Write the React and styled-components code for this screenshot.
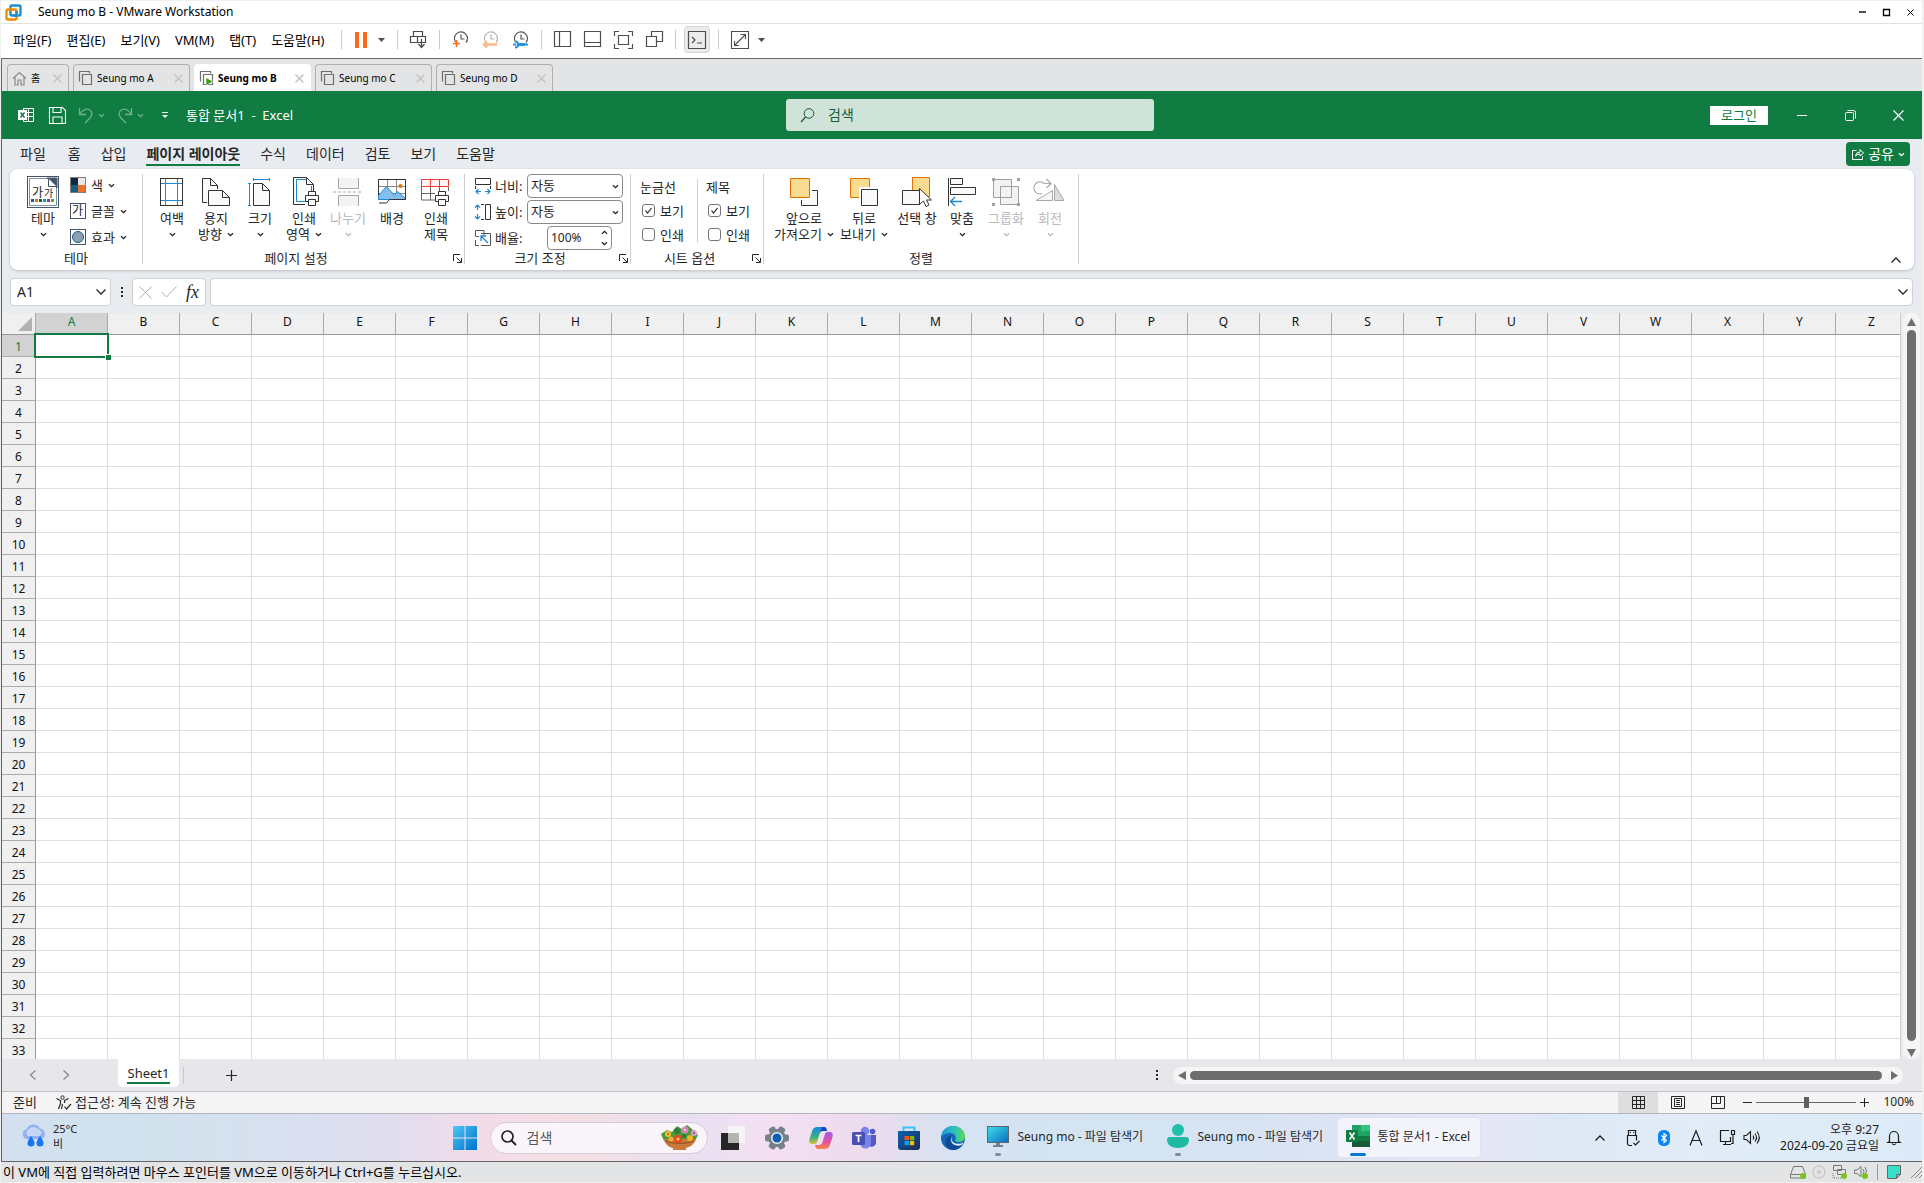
import React from 'react';
import styled, { createGlobalStyle, css } from 'styled-components';

const GREEN = '#107c41';
const INK = '#262626';
const BLUE = '#1e88d2';

const Global = createGlobalStyle`
  *, *::before, *::after { box-sizing: border-box; }
  body { margin: 0; background: #f0f0f0; overflow: hidden; }
  button, input, select { font: inherit; color: inherit; margin: 0; }
  button { border: 0; padding: 0; background: none; }
`;

/* ---------- shared pieces ---------- */

const Screen = styled.div`
  height: 100vh;
  padding: 1px 2px 1px 1px;
  display: flex;
  flex-direction: column;
  font: 12px/16px 'Noto Sans', 'Noto Sans CJK KR', sans-serif;
  color: ${INK};
  white-space: nowrap;
  cursor: default;
`;

const Draw = styled.svg`
  display: block;
  flex: none;
  overflow: visible;
  fill: none;
  stroke: ${(p) => p.$ink || 'currentColor'};
  stroke-width: 1;
`;

const Pic = ({ w = 16, h = w, box, ink, children }) => (
  <Draw width={w} height={h} viewBox={box || `0 0 ${w} ${h}`} $ink={ink} aria-hidden="true">
    {children}
  </Draw>
);

const Chevron = ({ up, big }) =>
  big ? (
    <Pic w={12} h={8}>
      <path d={up ? 'M1.5 6.5L6 2l4.5 4.5' : 'M1.5 1.5L6 6l4.5-4.5'} strokeWidth="1.3" />
    </Pic>
  ) : (
    <Pic w={7} h={5}>
      <path d={up ? 'M1 3.8L3.5 1.3 6 3.8' : 'M1 1.2L3.5 3.7 6 1.2'} strokeWidth="1.3" />
    </Pic>
  );

const Dots = () => (
  <Pic w={4} h={12}>
    <path d="M1 1h2v2H1zM1 5h2v2H1zM1 9h2v2H1z" fill="currentColor" stroke="none" />
  </Pic>
);

/* ---------- VMware frame ---------- */

const TitleBar = styled.header`
  flex: none;
  height: 23px;
  padding: 0 8px 0 4px;
  display: flex;
  align-items: center;
  gap: 16px;
  background: #fff;
  border-bottom: 1px solid #e1e1e1;
  color: #000;
`;

const TitleText = styled.h1`
  margin: 0;
  flex: 1;
  font-size: 12px;
  font-weight: 400;
`;

const FrameButton = styled.button`
  display: flex;
  justify-content: center;
  width: 8px;
`;

const MenuBar = styled.nav`
  flex: none;
  height: 35px;
  padding: 0 12px 3px;
  display: flex;
  align-items: center;
  background: #fff;
  border-bottom: 1px solid #666;
  color: #000;
`;

const MenuItems = styled.div`
  display: flex;
  gap: 15px;
  margin-right: 17px;
  font-size: 13px;
  button { line-height: 20px; }
`;

const ToolGroup = styled.div`
  display: flex;
  align-items: center;
  gap: 13px;
  padding: 0 ${(p) => (p.$tight ? 8 : 12)}px;
  color: #4d4d4d;
  border-left: 1px solid #c8c8c8;
  height: 19px;
`;

const ToolButton = styled.button`
  display: flex;
  align-items: center;
  justify-content: center;
  gap: 9px;
  min-width: 17px;
  height: 27px;
  ${(p) => p.$pressed && css`
    width: 26px;
    border: 1px solid #d3d3d3;
    border-radius: 4px;
    background: #ebeced;
  `}
`;

const TabBar = styled.div`
  flex: none;
  height: 32px;
  padding: 5px 5px 0;
  display: flex;
  gap: 4px;
  background: #e3e4e6;
  border-left: 1px solid #666;
`;

const VmTab = styled.div`
  width: ${(p) => (p.$home ? 62 : 117)}px;
  padding: 0 6px 0 4px;
  display: flex;
  align-items: center;
  gap: 4px;
  border: 1px solid #b0b0b0;
  border-bottom: 0;
  border-radius: 4px 4px 0 0;
  color: #000;
  font-size: 10px;
  ${(p) => p.$on && css`
    background: #fff;
    border-color: #fff;
    font-weight: 700;
  `}
`;

const TabLabel = styled.button`
  flex: 1;
  display: flex;
  align-items: center;
  gap: 4px;
  font-weight: inherit;
`;

const Close = styled.button`
  color: #c4c4c4;
`;

const Guest = styled.main`
  flex: 1;
  min-height: 0;
  display: flex;
  flex-direction: column;
  border-left: 1px solid #5f5f66;
  border-bottom: 1px solid #666;
  background: #e8ecf1;
`;

const HostStatus = styled.footer`
  flex: none;
  height: 20px;
  padding-left: 2px;
  display: flex;
  align-items: center;
  justify-content: space-between;
  background: #e3e4e6;
  color: #000;
  font-size: 13px;
`;

const Devices = styled.div`
  display: flex;
  align-items: center;
  gap: 6px;
`;

const DeviceRule = styled.span`
  width: 1px;
  height: 16px;
  margin: 0 3px;
  background: #999;
`;

/* ---------- Excel title ---------- */

const ExcelTitle = styled.header`
  flex: none;
  height: 48px;
  padding-left: 16px;
  display: grid;
  grid-template-columns: 1fr 368px 1fr;
  align-items: center;
  background: ${GREEN};
  color: #fff;
`;

const Quick = styled.div`
  display: flex;
  align-items: center;
  gap: 13px;
`;

const QuickButton = styled.button`
  display: flex;
  align-items: center;
  gap: 5px;
  opacity: ${(p) => (p.$dim ? 0.4 : 1)};
`;

const DocName = styled.span`
  margin-left: 4px;
  font-size: 13px;
  white-space: pre;
`;

const SearchBox = styled.label`
  height: 32px;
  padding: 0 14px;
  display: flex;
  align-items: center;
  gap: 13px;
  border-radius: 3px;
  background: #cfe3d8;
  color: #185c37;
`;

const BareInput = styled.input`
  flex: 1;
  min-width: 0;
  width: 0;
  padding: 0;
  border: 0;
  outline: 0;
  background: none;
  font-size: 14px;
  &::placeholder { color: inherit; opacity: 1; }
`;

const WinButtons = styled.div`
  display: flex;
  align-items: center;
  justify-content: flex-end;
`;

const Login = styled.button`
  width: 58px;
  height: 19px;
  margin-right: 10px;
  background: #fff;
  color: ${GREEN};
  font-size: 13px;
  line-height: 18px;
`;

const WinButton = styled.button`
  width: 48px;
  height: 32px;
  display: flex;
  align-items: center;
  justify-content: center;
`;

/* ---------- ribbon ---------- */

const RibbonTabs = styled.nav`
  flex: none;
  height: 30px;
  padding: 0 12px 0 18px;
  display: flex;
  align-items: center;
  gap: 20px;
  font-size: 14px;
`;

const RibbonTab = styled.button`
  height: 24px;
  line-height: 21px;
  border-bottom: 2px solid transparent;
  &:first-child { margin-right: 2px; }
  ${(p) => p.$on && css`
    font-weight: 700;
    border-color: ${GREEN};
  `}
`;

const Share = styled.button`
  height: 24px;
  margin-left: auto;
  padding: 0 5px 0 6px;
  display: flex;
  align-items: center;
  gap: 4px;
  border-radius: 4px;
  background: ${GREEN};
  color: #fff;
  font-size: 14px;
`;

const Ribbon = styled.section`
  flex: none;
  height: 101px;
  margin: 0 8px;
  padding: 5px 0 6px;
  display: flex;
  border-radius: 8px;
  background: #fff;
  box-shadow: 0 1px 3px rgba(0, 0, 0, 0.2);
  font-size: 13px;
`;

const Group = styled.section`
  width: ${(p) => p.$w}px;
  display: flex;
  flex-direction: column;
  justify-content: space-between;
  border-right: 1px solid #d0d0d0;
`;

const GroupBody = styled.div`
  display: flex;
  padding-left: ${(p) => p.$pad}px;
`;

const GroupFoot = styled.div`
  height: 12px;
  display: flex;
  align-items: center;
  text-align: center;
  line-height: 16px;
  span { flex: 1; }
  button { padding: 0 2px 0 4px; }
`;

const BigButton = styled.button`
  width: ${(p) => p.$w || 44}px;
  display: flex;
  flex-direction: column;
  align-items: center;
  color: ${(p) => (p.$off ? '#b9b9b9' : INK)};
  line-height: 16px;
`;

const BigIcon = styled.span`
  height: 36px;
  display: flex;
  align-items: center;
`;

const Line2 = styled.span`
  min-height: 16px;
  display: flex;
  align-items: center;
  gap: 5px;
`;

const Stack = styled.div`
  display: flex;
  flex-direction: column;
  gap: 2px;
`;

const SmallButton = styled.button`
  height: 24px;
  padding: 0 5px 2px;
  display: flex;
  align-items: center;
  gap: 5px;
  line-height: 16px;
`;

const Field = styled.div`
  height: 24px;
  display: flex;
  align-items: center;
  gap: 4px;
  label { width: 28px; }
`;

const Framed = styled.div`
  width: ${(p) => p.$w}px;
  height: 24px;
  margin-left: ${(p) => p.$push || 0}px;
  display: grid;
  grid-template-columns: 1fr 10px;
  align-items: center;
  border: 1px solid #8a8a8a;
  border-radius: 4px;
  background: #fff;
  > svg { grid-area: 1 / 2; pointer-events: none; }
`;

const Select = styled.select`
  grid-area: 1 / 1 / 2 / 3;
  appearance: none;
  height: 22px;
  padding: 0 3px 2px;
  border: 0;
  outline: 0;
  background: none;
`;

const SpinInput = styled.input`
  width: 44px;
  padding: 0 3px;
  border: 0;
  outline: 0;
  background: none;
  font-size: 12px;
`;

const SpinButtons = styled.div`
  display: flex;
  flex-direction: column;
  gap: 6px;
  button { display: flex; }
`;

const Options = styled.div`
  width: 65px;
  height: 64px;
  margin-top: 5px;
  padding-left: 8px;
  display: flex;
  flex-direction: column;
  justify-content: space-between;
  line-height: 16px;
  & + & { border-left: 1px solid #d0d0d0; }
`;

const Check = styled.label`
  height: 17px;
  padding-left: 2px;
  display: flex;
  align-items: center;
  gap: 5px;
`;

const CheckFrame = styled.span`
  display: grid;
  width: 13px;
  height: 13px;
  > * { grid-area: 1 / 1; }
  svg { pointer-events: none; }
`;

const CheckInput = styled.input`
  appearance: none;
  width: 13px;
  height: 13px;
  border: 1px solid #767676;
  border-radius: 3px;
  background: #fff;
`;

const Collapse = styled.button`
  margin: auto 12px 0 auto;
`;

/* ---------- formula bar ---------- */

const FormulaBar = styled.div`
  flex: none;
  height: 43px;
  padding: 8px 9px 7px 8px;
  display: flex;
  align-items: center;
`;

const Box = styled.div`
  height: 28px;
  padding: 0 3px 0 6px;
  display: flex;
  align-items: center;
  gap: 9px;
  border: 1px solid #d1d1d1;
  border-radius: 4px;
  background: #fff;
  ${(p) => (p.$w ? css`width: ${p.$w}px;` : css`flex: 1; margin-left: 4px;`)}
`;

const DotGap = styled.span`
  width: 21px;
  display: flex;
  justify-content: center;
`;

const Fx = styled.span`
  font: italic 400 18px/18px 'Liberation Serif', serif;
`;

/* ---------- sheet ---------- */

const SheetArea = styled.div`
  flex: 1;
  min-height: 0;
  padding-right: 2px;
  display: flex;
  gap: 2px;
`;

const GridClip = styled.div`
  flex: 1;
  min-width: 0;
  overflow: hidden;
  background: #fff;
  border-right: 1px solid #d0d0d0;
`;

const Table = styled.table`
  width: 1906px;
  table-layout: fixed;
  border-collapse: separate;
  border-spacing: 0;
  color: #111;
  th, td { height: 22px; padding: 0; }
`;

const Corner = styled.th`
  width: 34px;
  background: #f0f0f0;
  border-right: 1px solid #ababab;
  border-bottom: 1px solid #999;
  svg { margin-left: auto; margin-right: 3px; }
`;

const headTone = css`
  font-weight: 400;
  line-height: 18px;
  background: ${(p) => (p.$on ? '#d2d2d2' : '#f0f0f0')};
  color: ${(p) => (p.$on ? GREEN : '#111')};
`;

const ColHead = styled.th`
  ${headTone}
  width: 72px;
  vertical-align: top;
  border-right: 1px solid #ababab;
  border-bottom: 1px solid #999;
`;

const RowHead = styled.th`
  ${headTone}
  vertical-align: bottom;
  border-right: 1px solid #999;
  border-bottom: 1px solid #ababab;
`;

const Cell = styled.td`
  position: relative;
  border-right: 1px solid #dedede;
  border-bottom: 1px solid #dedede;
`;

const Selection = styled.span`
  position: absolute;
  z-index: 1;
  inset: -2px;
  border: 2px solid ${GREEN};
  &::after {
    content: '';
    position: absolute;
    right: -4px;
    bottom: -4px;
    width: 6px;
    height: 6px;
    background: ${GREEN};
    border: solid #fff;
    border-width: 1px 0 0 1px;
  }
`;

const Track = styled.div`
  display: flex;
  align-items: center;
  gap: 4px;
  border-radius: 8px;
  background: #f5f5f5;
  color: #6e6e6e;
  ${(p) => (p.$vertical
    ? css`width: 17px; flex-direction: column; padding: 5px 0 2px;`
    : css`height: 17px; width: 730px; padding: 0 5px;`)}
`;

const Thumb = styled.span`
  flex: 1;
  border-radius: 5px;
  background: #6e6e6e;
  ${(p) => (p.$vertical ? css`width: 9px;` : css`height: 9px;`)}
`;

const SheetBar = styled.div`
  flex: none;
  height: 32px;
  padding-right: 19px;
  display: flex;
  align-items: center;
  background: #e7e7eb;
`;

const SheetNav = styled.div`
  width: 116px;
  padding-left: 27px;
  display: flex;
  gap: 25px;
  color: #8a8a8a;
`;

const SheetTab = styled.button`
  align-self: flex-start;
  width: 61px;
  height: 28px;
  display: flex;
  justify-content: center;
  background: #fff;
  border-radius: 0 0 5px 5px;
  font-size: 13px;
  span {
    height: 25px;
    padding: 0 1px;
    line-height: 28px;
    border-bottom: 2px solid ${GREEN};
  }
`;

const AddSheet = styled.button`
  margin-left: 4px;
  padding-left: 42px;
  border-left: 1px solid #c8c8c8;
`;

const SheetScroll = styled.div`
  margin-left: auto;
  display: flex;
  align-items: center;
  gap: 14px;
`;

const StatusBar = styled.div`
  flex: none;
  height: 23px;
  padding: 0 8px 1px 11px;
  display: flex;
  align-items: center;
  background: #f4f4f4;
  border-top: 1px solid #c3c3c7;
  border-bottom: 1px solid #b5b5c0;
  font-size: 13px;
`;

const Ready = styled.span`
  width: 43px;
`;

const Access = styled.button`
  display: flex;
  align-items: center;
  gap: 3px;
  margin-right: auto;
`;

const ViewButton = styled.button`
  width: 40px;
  height: 21px;
  display: flex;
  align-items: center;
  justify-content: center;
  background: ${(p) => (p.$on ? '#dedede' : 'none')};
`;

const Zoom = styled.div`
  margin-left: 5px;
  display: flex;
  align-items: center;
  gap: 4px;
`;

const ZoomValue = styled.button`
  margin-left: 10px;
  font-size: 12px;
`;

const Slider = styled.input`
  appearance: none;
  width: 100px;
  height: 12px;
  background: linear-gradient(#666, #666) center / 100% 1px no-repeat;
  &::-webkit-slider-thumb {
    appearance: none;
    width: 5px;
    height: 11px;
    background: #5e5e5e;
  }
`;

/* ---------- taskbar ---------- */

const Taskbar = styled.nav`
  flex: none;
  height: 47px;
  display: grid;
  grid-template-columns: 1fr auto 1fr;
  align-items: center;
  background: linear-gradient(90deg,
    #d4e0f0 0%, #cfe2ed 7%, #d8e0ef 15%, #e0ddef 20%, #f3dcea 25%,
    #f3dfe2 30%, #e8e0f2 36%, #f5e0f2 40%, #ecdcee 45%, #d5e3f2 50%,
    #d3e4f2 58%, #d8e3f3 66%, #e6e6f7 77%, #dde8f6 81%, #e2ecf9 88%, #dbebf7 100%);
`;

const Weather = styled.button`
  justify-self: start;
  margin-left: 19px;
  padding-bottom: 3px;
  display: flex;
  align-items: center;
  gap: 6px;
  text-align: left;
  line-height: 15px;
  font-size: 11px;
`;

const Pins = styled.div`
  margin-right: 2px;
  display: flex;
  align-items: center;
  gap: 3px;
`;

const PinRow = styled.div`
  display: flex;
`;

const Pin = styled.button`
  width: 44px;
  height: 40px;
  display: flex;
  align-items: center;
  justify-content: center;
`;

const TaskSearch = styled.label`
  width: 218px;
  height: 32px;
  padding: 0 8px 0 10px;
  display: flex;
  align-items: center;
  gap: 10px;
  border: 1px solid #d6ccd8;
  border-radius: 16px;
  background: #faf5fa;
  color: #555;
`;

const Task = styled.button`
  width: ${(p) => (p.$active ? 142 : 177)}px;
  height: 39px;
  padding: 0 8px;
  display: grid;
  grid-template-columns: 24px 1fr;
  grid-template-rows: 35px 3px;
  column-gap: 8px;
  align-items: center;
  text-align: left;
  border-radius: 4px;
  ${(p) => p.$active && css`
    background: #f3f4fb;
    box-shadow: 0 0 0 1px #e1e2f0;
  `}
`;

const TaskName = styled.span`
  padding-top: 3px;
`;

const Running = styled.span`
  justify-self: center;
  width: ${(p) => (p.$active ? 16 : 6)}px;
  height: 3px;
  border-radius: 2px;
  background: ${(p) => (p.$active ? '#0078d4' : '#868b92')};
`;

const Tray = styled.div`
  justify-self: end;
  margin-right: 21px;
  display: flex;
  align-items: center;
  gap: 8px;
  color: #1b1b1b;
`;

const TrayButton = styled.button`
  width: 24px;
  display: flex;
  justify-content: center;
`;

const TrayPair = styled.button`
  padding-left: 3px;
  display: flex;
  align-items: center;
  gap: 7px;
`;

const Clock = styled.button`
  min-width: 103px;
  margin-left: 8px;
  text-align: right;
  line-height: 16px;
  span { display: block; }
`;

/* ---------- icon drawings ---------- */

const Logo = () => (
  <Pic w={17} h={17}>
    <rect x="5.5" y="1.5" width="10" height="10" rx="1.5" stroke="#1f8fc9" strokeWidth="2.4" />
    <rect x="1.5" y="5.5" width="10" height="10" rx="1.5" stroke="#f38b00" strokeWidth="2.4" />
    <path d="M11.5 7v4.5H8" stroke="#1f8fc9" strokeWidth="2.4" />
  </Pic>
);

const Cross = ({ s = 8, w = 1.2 }) => (
  <Pic w={s}><path d={`M.5.5L${s - 0.5} ${s - 0.5}M${s - 0.5}.5L.5 ${s - 0.5}`} strokeWidth={w} /></Pic>
);

const Triangle = ({ d = 'M0 0h7L3.5 4z', w = 7, h = 4 }) => (
  <Pic w={w} h={h}><path d={d} fill="currentColor" stroke="none" /></Pic>
);

const ClockFace = ({ children, ink = '#555' }) => (
  <Pic w={17} h={17} ink={ink}>
    <path d="M3.5 11A6.5 6.5 0 1 1 14 11.5M9 3.5V8h3.5" strokeWidth="1.2" />
    {children}
  </Pic>
);

const VmIcon = ({ on }) => (
  <Pic w={15} h={16} ink="#6f6f6f">
    <path d="M1.5 11.5v-10h10v2M4.5 4.5h9v10h-9z" strokeWidth="1.2" />
    {on && <path d="M7 7.5v8l7-4z" fill="#3f9b0b" stroke="#fff" strokeWidth=".6" />}
  </Pic>
);

const Page = ({ x = 0, y = 0, w = 18, h = 24 }) => (
  <>
    <path d={`M${x + 0.5} ${y + 0.5}h${w - 8}l7 7v${h - 8}h-${w - 1}z`} fill="#fafafa" />
    <path d={`M${x + w - 7.5} ${y + 0.5}v7h7`} />
  </>
);

const Printer = () => (
  <>
    <path d="M12 14h16v15H12z" fill="#fff" stroke="none" />
    <path d="M15.5 18.5v-4h7v4M15.5 24.5h-3v-6h13v6h-3M15.5 22.5h7v6h-7z" fill="#fff" />
  </>
);

const pictures = {
  theme: (
    <Pic w={32} ink="#44546a">
      <rect x=".5" y=".5" width="31" height="31" fill="#fff" />
      <path d="M2.5 2.5h19l8 8v19h-27z" fill="#fff" stroke="#8090a8" />
      <path d="M20 2h10v10z" fill="#44546a" />
      <path d="M21.5 2.5v8h8" fill="#fff" />
      <text x="5" y="21" fontSize="12" fill="#222" stroke="none" fontFamily="Noto Sans CJK KR">가</text>
      <text x="17" y="21" fontSize="10" fill="#222" stroke="none" fontFamily="Noto Sans CJK KR">가</text>
      <g stroke="none">
        <path d="M4 23h3v3H4z" fill="#156082" /><path d="M8 23h3v3H8z" fill="#e97132" />
        <path d="M12 23h3v3h-3z" fill="#196b24" /><path d="M16 23h3v3h-3z" fill="#0f9ed5" />
        <path d="M20 23h3v3h-3z" fill="#a02b93" /><path d="M24 23h3v3h-3z" fill="#4ea72e" />
      </g>
    </Pic>
  ),
  color: (
    <Pic ink="none">
      <path d="M0 0h16v16H0z" fill="#7f7f7f" /><path d="M1 1h7v7H1z" fill="#0e2841" />
      <path d="M8 1h7v7H8z" fill="#e8e8e8" /><path d="M1 8h7v7H1z" fill="#156082" />
      <path d="M8 8h7v7H8z" fill="#e97132" />
    </Pic>
  ),
  font: (
    <Pic ink="#44546a">
      <rect x=".5" y=".5" width="15" height="15" fill="#fff" />
      <text x="2" y="12" fontSize="12" fill="#222" stroke="none" fontFamily="Noto Sans CJK KR">가</text>
    </Pic>
  ),
  effect: (
    <Pic ink="#44546a">
      <rect x=".5" y=".5" width="15" height="15" fill="#fff" />
      <circle cx="8" cy="8" r="5.5" fill="#8ea0b4" stroke="#156082" />
    </Pic>
  ),
  margins: (
    <Pic w={24} h={28} ink="#333">
      <rect x=".5" y=".5" width="22" height="27" fill="#fff" />
      <path d="M5.5 1v26M17.5 1v26M1 5.5h21M1 22.5h21" stroke={BLUE} />
    </Pic>
  ),
  orient: (
    <Pic w={28} h={28} ink="#333">
      <Page w={16} h={25} />
      <path d="M5 11h24v18H5z" fill="#fff" stroke="none" />
      <Page x={6} y={12} w={22} h={16} />
    </Pic>
  ),
  size: (
    <Pic w={24} h={28} ink="#333">
      <Page x={5} y={5} w={17} h={23} />
      <path d="M5.5 1.5h16M5.5 0v3M21.5 0v3M1.5 5.5v22M0 5.5h3M0 27.5h3" stroke={BLUE} />
    </Pic>
  ),
  area: (
    <Pic w={32} h={30} box="-5 0 32 30" ink="#333">
      <Page x={0} y={0} w={21} h={28} />
      <path d="M13 2.5H3.5v22H14M18.5 9v6" stroke={BLUE} />
      <Printer />
    </Pic>
  ),
  breaks: (
    <Pic w={30} h={28} ink="#a6a6a6">
      <path d="M5.5 0v10.5h20V0M5.5 28V17.5h20V28" fill="#f3f3f3" />
      <path d="M0 14h30" strokeDasharray="3 2" />
    </Pic>
  ),
  background: (
    <Pic w={28} h={28} ink="#333">
      <path d="M.5 1.5h27v20H.5z" fill="#fff" />
      <path d="M9.5 2v20M18.5 2v20M1 8.5h27M1 15.5h27" stroke="#888" />
      <path d="M.5 17.5l8-9 8 9 3-4 8 7v1H.5z" fill="#83beec" stroke={BLUE} />
      <circle cx="22.5" cy="8" r="2" fill="#e8710a" stroke="none" />
      <path d="M.5 1.5h27v20h-16l-3 3.5H1" />
    </Pic>
  ),
  titles: (
    <Pic w={30} h={28} ink="#666">
      <path d="M.5 9v13h27V9M9.5 9v13M18.5 9v13M.5 15.5h27" />
      <path d="M.5 1.5h27v7H.5zM9.5 1.5v7M18.5 1.5v7" stroke="#e8413c" fill="#fdf3f3" />
      <g transform="translate(2 -1)" stroke="#333"><Printer /></g>
    </Pic>
  ),
  width: (
    <Pic ink="#333">
      <path d="M.5.5h15v6H.5zM.5 8v3M15.5 8v3" />
      <path d="M1 13.5h5M10 13.5h5M3.5 11L1 13.5 3.5 16M12.5 11l2.5 2.5-2.5 2.5" stroke={BLUE} strokeWidth="1.2" />
    </Pic>
  ),
  height: (
    <Pic ink="#333">
      <path d="M10.5.5h5v15h-5zM6 .5h3M6 15.5h3" />
      <path d="M2.5 1v5M2.5 10v5M0 3.5L2.5 1 5 3.5M0 12.5L2.5 15 5 12.5" stroke={BLUE} strokeWidth="1.2" />
    </Pic>
  ),
  scale: (
    <Pic ink="#555">
      <path d="M.5 6V.5H9V5M.5 10v5.5H4M6 3.5h9.5v12H6M4 6.5H.5" />
      <path d="M13 13L6 6M6 11V6h5" stroke={BLUE} strokeWidth="1.3" />
    </Pic>
  ),
  front: (
    <Pic w={28} h={28} ink="#333">
      <path d="M11.5 12.5h16v15h-16z" fill="#fafafa" />
      <path d="M0 0h22v22H0z" fill="#fff" stroke="none" />
      <path d="M.5.5h19v19H.5z" fill="#f8db8f" stroke="#e07000" />
    </Pic>
  ),
  back: (
    <Pic w={28} h={28} ink="#333">
      <path d="M.5.5h19v19H.5z" fill="#f8db8f" stroke="#e07000" />
      <path d="M9 9h19v19H9z" fill="#fff" stroke="none" />
      <path d="M11.5 11.5h16v16h-16z" fill="#fafafa" />
    </Pic>
  ),
  pane: (
    <Pic w={30} h={30} ink="#333">
      <path d="M10.5.5h17v19h-17z" fill="#f8db8f" stroke="#e07000" />
      <path d="M.5 13.5h17v14H.5z" fill="#fafafa" />
      <path d="M17.5 11.5v16l4-3.5 2.5 5.5 3-1.5-2.5-5h5z" fill="#fff" />
    </Pic>
  ),
  align: (
    <Pic w={28} h={28} ink="#333">
      <path d="M.5 0v28M2.5.5h12v6h-12zM2.5 9.5h25v7h-25z" fill="#fafafa" />
      <path d="M14 23.5H3M7 19l-4.5 4.5L7 28" stroke={BLUE} strokeWidth="1.4" />
    </Pic>
  ),
  group: (
    <Pic w={28} h={28} ink="#a0a0a0">
      <path d="M1.5 1.5h18v18h-18zM8.5 8.5h18v18h-18zM8.5 8.5h11v11h-11z" fill="#f3f3f3" />
      <path d="M0 0h3v3H0zM25 0h3v3h-3zM0 25h3v3H0zM25 25h3v3h-3z" fill="#a0a0a0" stroke="none" />
    </Pic>
  ),
  rotate: (
    <Pic w={30} h={28} ink="#a8a8a8">
      <path d="M1 22.5h16.5v-10z" fill="#f6f6f6" /><path d="M19.5 6.5v16h9.500z" fill="#dcdcdc" />
      <path d="M7 15.5A6 6 0 1 1 9 5.5h6M11.5 1L16 5.500 11.500 10" strokeWidth="1.2" />
    </Pic>
  ),
  launcher: (
    <Pic w={9} h={9}><path d="M.5 7V.5H7M3.5 3.5L8 8M8.5 4v4.5H4" /></Pic>
  ),
};

/* ---------- Excel data ---------- */

const ribbonTabs = ['파일', '홈', '삽입', '페이지 레이아웃', '수식', '데이터', '검토', '보기', '도움말'];

const pageSetup = [
  { pic: 'margins', a: '여백', drop: true },
  { pic: 'orient', a: '용지', b: '방향', drop: true },
  { pic: 'size', a: '크기', drop: true },
  { pic: 'area', a: '인쇄', b: '영역', drop: true },
  { pic: 'breaks', a: '나누기', drop: true, off: true },
  { pic: 'background', a: '배경' },
  { pic: 'titles', a: '인쇄', b: '제목' },
];

const arrange = [
  { pic: 'front', a: '앞으로', b: '가져오기', drop: true, w: 60 },
  { pic: 'back', a: '뒤로', b: '보내기', drop: true, w: 60 },
  { pic: 'pane', a: '선택 창', w: 46 },
  { pic: 'align', a: '맞춤', drop: true },
  { pic: 'group', a: '그룹화', drop: true, off: true },
  { pic: 'rotate', a: '회전', drop: true, off: true },
];

const columns = 'ABCDEFGHIJKLMNOPQRSTUVWXYZ'.split('');
const rows = Array.from({ length: 33 }, (_, i) => i + 1);

const Big = ({ pic, a, b, drop, off, w }) => (
  <BigButton $w={w} $off={off} disabled={off}>
    <BigIcon>{pictures[pic]}</BigIcon>
    <span>{a}</span>
    <Line2>{b}{drop && <Chevron />}</Line2>
  </BigButton>
);

const Foot = ({ name, launcher }) => (
  <GroupFoot>
    <span>{name}</span>
    {launcher && <button aria-label={`${name} 설정`}>{pictures.launcher}</button>}
  </GroupFoot>
);

const Tick = ({ name, on }) => (
  <Check>
    <CheckFrame>
      <CheckInput type="checkbox" defaultChecked={on} />
      {on && <Pic w={13}><path d="M3.5 6.5l2 2.5 4-5" strokeWidth="1.2" /></Pic>}
    </CheckFrame>
    {name}
  </Check>
);

const ExcelRibbon = () => (
  <Ribbon>
    <Group $w={133}>
      <GroupBody $pad={11}>
        <Big pic="theme" a="테마" drop />
        <Stack>
          {[['color', '색'], ['font', '글꼴'], ['effect', '효과']].map(([pic, name]) => (
            <SmallButton key={name}>{pictures[pic]}{name}<Chevron /></SmallButton>
          ))}
        </Stack>
      </GroupBody>
      <Foot name="테마" />
    </Group>
    <Group $w={322}>
      <GroupBody $pad={7}>{pageSetup.map((b) => <Big key={b.pic} {...b} />)}</GroupBody>
      <Foot name="페이지 설정" launcher />
    </Group>
    <Group $w={166}>
      <GroupBody $pad={10}>
        <Stack>
          <Field>
            {pictures.width}<label htmlFor="fit-w">너비:</label>
            <Framed $w={96}><Select id="fit-w"><option>자동</option></Select><Chevron /></Framed>
          </Field>
          <Field>
            {pictures.height}<label htmlFor="fit-h">높이:</label>
            <Framed $w={96}><Select id="fit-h"><option>자동</option></Select><Chevron /></Framed>
          </Field>
          <Field>
            {pictures.scale}<label htmlFor="fit-s">배율:</label>
            <Framed $w={65} $push={20}>
              <SpinInput id="fit-s" defaultValue="100%" />
              <SpinButtons>
                <button aria-label="크게"><Chevron up /></button>
                <button aria-label="작게"><Chevron /></button>
              </SpinButtons>
            </Framed>
          </Field>
        </Stack>
      </GroupBody>
      <Foot name="크기 조정" launcher />
    </Group>
    <Group $w={133}>
      <GroupBody $pad={1}>
        {['눈금선', '제목'].map((name) => (
          <Options key={name}>
            <span>{name}</span>
            <Tick name="보기" on />
            <Tick name="인쇄" />
          </Options>
        ))}
      </GroupBody>
      <Foot name="시트 옵션" launcher />
    </Group>
    <Group $w={315}>
      <GroupBody $pad={10}>{arrange.map((b) => <Big key={b.pic} {...b} />)}</GroupBody>
      <Foot name="정렬" />
    </Group>
    <Collapse aria-label="리본 축소"><Chevron up big /></Collapse>
  </Ribbon>
);

const Sheet = () => (
  <SheetArea>
    <GridClip>
      <Table>
        <thead>
          <tr>
            <Corner><Pic w={14} h={14}><path d="M14 0v14H0z" fill="#b1b1b1" stroke="none" /></Pic></Corner>
            {columns.map((c) => <ColHead key={c} $on={c === 'A'}>{c}</ColHead>)}
          </tr>
        </thead>
        <tbody>
          {rows.map((r) => (
            <tr key={r}>
              <RowHead $on={r === 1}>{r}</RowHead>
              {columns.map((c) => (
                <Cell key={c}>{r === 1 && c === 'A' && <Selection />}</Cell>
              ))}
            </tr>
          ))}
        </tbody>
      </Table>
    </GridClip>
    <Track $vertical>
      <Triangle w={9} h={8} d="M0 8h9L4.5 0z" />
      <Thumb $vertical />
      <Triangle w={9} h={12} d="M0 4h9l-4.5 8z" />
    </Track>
  </SheetArea>
);

/* ---------- taskbar drawings ---------- */

const WeatherIcon = () => (
  <Pic w={26} h={24} ink="none">
    <path d="M6 15a5 5 0 0 1-.5-9.8A7.5 7.5 0 0 1 19 4.5a5.5 5.5 0 0 1 1.5 10.5z" fill="#8fb3ec" />
    <path d="M7 12a4 4 0 0 1 1-7 6 6 0 0 1 9 0 4 4 0 0 1 2 7z" fill="#c5d6f6" />
    <path d="M10 12c2 3 3.5 5 3.5 7a3.5 3.5 0 0 1-7 0c0-2 1.5-4 3.5-7zM19 12c2 3 3.5 5 3.5 7a3.5 3.5 0 0 1-7 0c0-2 1.5-4 3.5-7z" fill="#1677f0" />
  </Pic>
);

const Windows = () => (
  <Pic w={24} ink="none">
    <defs>
      <linearGradient id="win" x2="1" y2="1"><stop stopColor="#4cc9f5" /><stop offset="1" stopColor="#0070cc" /></linearGradient>
    </defs>
    <path d="M0 0h11.5v11.5H0zM12.5 0H24v11.5H12.5zM0 12.5h11.5V24H0zM12.5 12.5H24V24H12.5z" fill="url(#win)" />
  </Pic>
);

const Bowl = () => (
  <Pic w={39} h={26} ink="none">
    <path d="M1 9l6-4 5 2 5-6 5 3 5-4 5 4 6 6-3 6H4z" fill="#4e9a3a" />
    <path d="M4 14h32c-2 6-6 8-10 9v2H13v-2C8 22 5 19 4 14z" fill="#c9793a" />
    <path d="M5 16c8 3 22 3 29 0" stroke="#8d4a1c" />
    <circle cx="8" cy="9" r="3" fill="#f2c230" /><circle cx="18" cy="14" r="4" fill="#e8452c" />
    <circle cx="25" cy="5" r="3.5" fill="#cf86c8" /><circle cx="30" cy="13" r="3" fill="#f0b429" />
    <circle cx="17" cy="6" r="3" fill="#2f7d32" /><circle cx="34" cy="8" r="3" fill="#d9a0cc" />
    <circle cx="11" cy="14" r="2.5" fill="#f0b429" /><circle cx="24" cy="11" r="2" fill="#2f7d32" />
    <circle cx="8" cy="9" r="1" fill="#a3541a" /><circle cx="18" cy="14" r="1.5" fill="#fbd34c" />
    <circle cx="25" cy="5" r="1" fill="#fbe28a" /><circle cx="34" cy="8" r="1" fill="#8a3f86" />
  </Pic>
);

const TaskView = () => (
  <Pic w={24} ink="none">
    <path d="M0 7h18v17H0z" fill="#262626" /><path d="M7 0h17v17H7z" fill="#f5f5f5" /><path d="M7 7h11v10H7z" fill="#b4b4b4" />
  </Pic>
);

const Gear = () => (
  <Pic w={24} ink="none">
    <g fill="#76818c">
      <circle cx="12" cy="12" r="9" />
      {[0, 60, 120].map((a) => (
        <rect key={a} x="8.5" y="0" width="7" height="24" rx="2" transform={`rotate(${a + 30} 12 12)`} />
      ))}
    </g>
    <circle cx="12" cy="12" r="6" fill="#e9eef3" /><circle cx="12" cy="12" r="4.5" fill="#0f5fb0" />
  </Pic>
);

const Copilot = () => (
  <Pic w={24} ink="none">
    <defs>
      <linearGradient id="cpa" x2="0" y2="1"><stop stopColor="#1488e6" /><stop offset=".6" stopColor="#35b37e" /><stop offset="1" stopColor="#d8c22f" /></linearGradient>
      <linearGradient id="cpb" x2="0" y2="1"><stop stopColor="#9a5cf0" /><stop offset=".6" stopColor="#e8539a" /><stop offset="1" stopColor="#f98a4a" /></linearGradient>
    </defs>
    <path d="M8 1h7c2 0 2.5 2 3 4h-4c-2 0-3 1-3.5 3L8 16c-.5 1.5-1.5 2-3 2H3c-3 0-3-3-2.5-5l3-9C4.3 2 6 1 8 1z" fill="url(#cpa)" />
    <path d="M16 23H9c-2 0-2.5-2-3-4h4c2 0 3-1 3.5-3L16 8c.5-1.5 1.5-2 3-2h2c3 0 3 3 2.5 5l-3 9c-.8 2-2.5 3-4.5 3z" fill="url(#cpb)" />
    <path d="M15 1c2 0 2.5 2 3 4h-4c-1 0-2 .5-2.6 1.5L13 1z" fill="#1a3fc4" />
  </Pic>
);

const Teams = () => (
  <Pic w={25} h={24} ink="none">
    <circle cx="13" cy="5" r="4.2" fill="#7b83eb" /><circle cx="20.5" cy="5.5" r="2.8" fill="#5059c9" />
    <path d="M16 9h8v7a4.5 4.5 0 0 1-8 3z" fill="#5059c9" /><path d="M8 9h11v8a5.5 5.5 0 0 1-11 0z" fill="#7b83eb" />
    <rect y="6" width="13" height="13" rx="1.5" fill="#4650b8" /><path d="M3.5 9.5h6M6.5 9.5V16" stroke="#fff" strokeWidth="1.7" />
  </Pic>
);

const Store = () => (
  <Pic w={24} ink="none">
    <defs><linearGradient id="st" x2="1" y2="1"><stop stopColor="#0b62b4" /><stop offset="1" stopColor="#1c2b52" /></linearGradient></defs>
    <path d="M6.5 6V1.5h11V6" stroke="#35c5f5" strokeWidth="2" />
    <path d="M1 5h22v16a3 3 0 0 1-3 3H4a3 3 0 0 1-3-3z" fill="url(#st)" />
    <path d="M7.5 10H12v4.2H7.5z" fill="#f25022" /><path d="M12.8 10h4.4v4.2h-4.4z" fill="#7fba00" />
    <path d="M7.5 15H12v4.2H7.5z" fill="#00a4ef" /><path d="M12.8 15h4.4v4.2h-4.4z" fill="#ffb900" />
  </Pic>
);

const Edge = () => (
  <Pic w={24} ink="none">
    <defs>
      <linearGradient id="eg" x2="1"><stop stopColor="#1b9de2" /><stop offset=".6" stopColor="#2fc2b8" /><stop offset="1" stopColor="#66d84f" /></linearGradient>
    </defs>
    <circle cx="12" cy="12" r="12" fill="#1565b8" />
    <path d="M0 11C1 4 6 0 12 0c7 0 12 5 12 10 0 4-3 6-6 6-4 0-4-1.5-3.5-2.5C16 10 13 7 9 7c-4 0-7.5 2-9 4z" fill="url(#eg)" />
    <path d="M11.5 9.5C8 11 8 17 13 19c4 1.5 8 0 9.5-2-2 5-8 8-13 6.5C5 22 3 17 5 13c1.5-2.5 4-3.8 6.5-3.5z" fill="#0c4a94" />
    <path d="M11.5 10c-1.5 2-1.5 6 3 7.5 3 .8 6 0 8.2-1-.5 1.3-1.2 2-2 2.5-3 1-6 .8-8-.5-3-2-3.5-6-1.2-8.5z" fill="#e3eaf6" />
  </Pic>
);

const Monitor = () => (
  <Pic w={24} h={22} ink="none">
    <defs><linearGradient id="mo" x2="1" y2="1"><stop stopColor="#3ddcea" /><stop offset="1" stopColor="#0d6fc0" /></linearGradient></defs>
    <path d="M1 1h22v17H1z" fill="#5c6670" /><path d="M2 2h20v15H2z" fill="url(#mo)" /><path d="M10 18h4v2h3v2H7v-2h3z" fill="#77818a" />
  </Pic>
);

const Person = () => (
  <Pic w={24} ink="none">
    <circle cx="12" cy="6" r="6" fill="#1fbfa8" /><path d="M1 16a3 3 0 0 1 3-3h16a3 3 0 0 1 3 3c0 5-5 8-11 8S1 21 1 16z" fill="#1fb8a3" />
  </Pic>
);

const ExcelIcon = () => (
  <Pic w={24} h={22} ink="none">
    <path d="M6 0h18v22H6z" fill="#185c37" /><path d="M6 0h9v11H6z" fill="#21a366" />
    <path d="M15 0h9v6h-9z" fill="#33c481" /><path d="M15 6h9v5h-9z" fill="#21a366" /><path d="M6 11h18v5H6z" fill="#107c41" />
    <rect y="5" width="12" height="12" rx="1" fill="#107c41" /><path d="M3.5 7.5l5 7M8.5 7.5l-5 7" stroke="#fff" strokeWidth="1.6" />
  </Pic>
);

const Tasks = () => (
  <Taskbar>
    <Weather><WeatherIcon /><span>25°C<br />비</span></Weather>
    <Pins>
      <Pin aria-label="시작"><Windows /></Pin>
      <TaskSearch>
        <Pic w={16} ink="#222"><circle cx="6.5" cy="6.5" r="5.5" strokeWidth="1.7" /><path d="M10.5 10.5L15 15" strokeWidth="2" /></Pic>
        <BareInput placeholder="검색" aria-label="작업 표시줄 검색" />
        <Bowl />
      </TaskSearch>
      <PinRow>
        <Pin aria-label="작업 보기"><TaskView /></Pin>
        <Pin aria-label="설정"><Gear /></Pin>
        <Pin aria-label="Copilot"><Copilot /></Pin>
        <Pin aria-label="Teams"><Teams /></Pin>
        <Pin aria-label="Store"><Store /></Pin>
        <Pin aria-label="Edge"><Edge /></Pin>
      </PinRow>
      <Task><Monitor /><TaskName>Seung mo - 파일 탐색기</TaskName><Running /></Task>
      <Task><Person /><TaskName>Seung mo - 파일 탐색기</TaskName><Running /></Task>
      <Task $active><ExcelIcon /><TaskName>통합 문서1 - Excel</TaskName><Running $active /></Task>
    </Pins>
    <Tray>
      <TrayButton aria-label="숨겨진 아이콘"><Chevron up big /></TrayButton>
      <TrayButton aria-label="USB">
        <Pic w={16} h={18}><path d="M4.5 6.5v-5h7v5M8 16.5H5.5a2 2 0 0 1-2-2v-8h9v5M6 3.5h1M9 3.5h1M9.5 14l2 2 4-4" strokeWidth="1.2" /></Pic>
      </TrayButton>
      <TrayButton aria-label="Bluetooth">
        <Pic w={12} h={16} ink="#fff"><rect width="12" height="16" rx="5.5" fill="#0a84f5" stroke="none" /><path d="M3.5 5.5l5 5L6 12.5v-9l2.5 2-5 5" strokeWidth="1.1" /></Pic>
      </TrayButton>
      <TrayButton aria-label="입력기">
        <Pic w={14} h={16}><path d="M1 15.5L7 .8l6 14.7M3 10.5h8" strokeWidth="1.2" /></Pic>
      </TrayButton>
      <TrayPair aria-label="네트워크 및 소리">
        <Pic w={17} h={17}><path d="M10 1.5H1.5v11h10V8M4 15.5h8M6.5 13v2M12.5 1.5h3v4h-3zM14 5.5v9h-2" strokeWidth="1.2" /></Pic>
        <Pic w={17} h={15}><path d="M1 5.5h2.5l4-4v12l-4-4H1zM10 5.5q1.5 2 0 4M12 3.5q3 4 0 8M14 1.5q4.5 6 0 12" strokeWidth="1.1" /></Pic>
      </TrayPair>
      <Clock><span>오후 9:27</span><span>2024-09-20 금요일</span></Clock>
      <button aria-label="알림">
        <Pic w={14} h={16}><path d="M2.5 11.5V6a4.5 4.5 0 0 1 9 0v5.5l1.5 1H1zM5 13.5q2 2.5 4 0" strokeWidth="1.2" /></Pic>
      </button>
    </Tray>
  </Taskbar>
);

/* ---------- VMware parts ---------- */

const vmTabs = ['Seung mo A', 'Seung mo B', 'Seung mo C', 'Seung mo D'];
const menus = ['파일(F)', '편집(E)', '보기(V)', 'VM(M)', '탭(T)', '도움말(H)'];

const VmTop = () => (
  <>
    <TitleBar>
      <Logo />
      <TitleText>Seung mo B - VMware Workstation</TitleText>
      <FrameButton aria-label="최소화"><Pic w={7} h={8}><path d="M0 4h7" strokeWidth="1.4" /></Pic></FrameButton>
      <FrameButton aria-label="최대화"><Pic w={7} h={7}><path d="M.5.5h6v6h-6z" strokeWidth="1.3" /></Pic></FrameButton>
      <FrameButton aria-label="닫기"><Cross s={7} w={1} /></FrameButton>
    </TitleBar>
    <MenuBar>
      <MenuItems>{menus.map((m) => <button key={m}>{m}</button>)}</MenuItems>
      <ToolGroup>
        <ToolButton aria-label="일시 중단">
          <Pic w={15} h={16}><path d="M1 0h4v16H1zM9 0h4v16H9z" fill="#f96a1b" stroke="none" /></Pic>
          <Triangle />
        </ToolButton>
      </ToolGroup>
      <ToolGroup>
        <ToolButton aria-label="Ctrl+Alt+Del">
          <Pic w={17} h={17} ink="#4a4a4a"><path d="M3.5.5h9v5h-9zM.5 5.5h7v6h-7zM7.5 5.5h8v6h-8zM11.5 8v8.5M8.5 13l3 3.5 3-3.5" strokeWidth="1.2" /></Pic>
        </ToolButton>
      </ToolGroup>
      <ToolGroup>
        <ToolButton aria-label="스냅샷"><ClockFace><path d="M1 12.5h7M4.5 9v7" stroke="#f96a1b" strokeWidth="1.5" /></ClockFace></ToolButton>
        <ToolButton aria-label="되돌리기"><ClockFace ink="#b5b5b5"><path d="M2 13.500h13M5 10.500l-3 3 3 3" stroke="#fbb88d" strokeWidth="2.5" /></ClockFace></ToolButton>
        <ToolButton aria-label="스냅샷 관리">
          <ClockFace>
            <path d="M6 12h7v3H6z" fill="#2196e0" stroke="none" />
            <path d="M3 10.500q3 0 3 3t-3 3M1 13.500h3M13 13.500h3" stroke="#2196e0" strokeWidth="2" />
          </ClockFace>
        </ToolButton>
      </ToolGroup>
      <ToolGroup>
        <ToolButton aria-label="라이브러리"><Pic w={17} h={17}><path d="M.5.5h16v15H.5zM5.5.5v15" strokeWidth="1.2" /></Pic></ToolButton>
        <ToolButton aria-label="축소판"><Pic w={17} h={17}><path d="M.5.5h16v15H.5zM.5 11.5h16" strokeWidth="1.2" /></Pic></ToolButton>
        <ToolButton aria-label="전체 화면"><Pic w={19} h={18}><path d="M.5 5V.5H5M14 .5h4.5V5M18.5 13v4.5H14M5 17.5H.5V13M4.5 4.5h10v9h-10z" strokeWidth="1.2" /></Pic></ToolButton>
        <ToolButton aria-label="Unity"><Pic w={17} h={17}><path d="M5.5 5V.5h11v10H11M.5 5.5h10v10H.5z" strokeWidth="1.2" /></Pic></ToolButton>
      </ToolGroup>
      <ToolGroup $tight>
        <ToolButton $pressed aria-label="콘솔"><Pic w={18} h={18}><path d="M.5.5h17v17H.5zM4 6l3 3-3 3M9 12h5" strokeWidth="1.2" /></Pic></ToolButton>
      </ToolGroup>
      <ToolGroup>
        <ToolButton aria-label="늘이기">
          <Pic w={18} h={18}><path d="M.5.5h17v17H.5zM4 14L14 4M9.5 3.5h5V8M3.5 10v4.5H8" strokeWidth="1.1" /></Pic>
          <Triangle />
        </ToolButton>
      </ToolGroup>
    </MenuBar>
    <TabBar>
      <VmTab $home>
        <TabLabel>
          <Pic w={15} h={15} ink="#8a8a8a"><path d="M1 7.5l6.5-6 6.5 6M3 6v8h3V9h3v5h3V6" strokeWidth="1.2" /></Pic>홈
        </TabLabel>
        <Close aria-label="홈 닫기"><Cross s={9} w={1.5} /></Close>
      </VmTab>
      {vmTabs.map((name, i) => (
        <VmTab key={name} $on={i === 1}>
          <TabLabel><VmIcon on={i === 1} />{name}</TabLabel>
          <Close aria-label={`${name} 닫기`}><Cross s={9} w={1.5} /></Close>
        </VmTab>
      ))}
    </TabBar>
  </>
);

const VmBottom = () => (
  <HostStatus>
    <span>이 VM에 직접 입력하려면 마우스 포인터를 VM으로 이동하거나 Ctrl+G를 누르십시오.</span>
    <Devices>
      <Pic w={16} h={14} ink="#777"><path d="M3.5 1.5h9l3 8V13H.5V9.5zM.5 9.5h15" /><circle cx="13" cy="11" r="3" fill="#7ac51c" stroke="none" /></Pic>
      <Pic w={14} h={14} ink="#bbb"><circle cx="7" cy="7" r="6" /><circle cx="7" cy="7" r="1.5" /></Pic>
      <Pic w={16} h={14} ink="#777"><path d="M1.5.5h8v5h-8zM5.5 4.5h8v5h-8z" fill="#e3e4e6" /><path d="M1 8v5h8" strokeDasharray="1 1" /><circle cx="12" cy="11" r="3" fill="#7ac51c" stroke="none" /></Pic>
      <Pic w={14} h={14} ink="#777"><path d="M.5 5H3l4-3.5v10L3 8.5H.5zM9 4q2 2.5 0 5M11 2q3 4 0 8" /><circle cx="11" cy="11" r="3" fill="#7ac51c" stroke="none" /></Pic>
      <DeviceRule />
      <Pic w={14} h={14} ink="#666"><path d="M.5.5h13v9l-4 4h-9z" fill="#38e0cc" /><path d="M9.5 13.5v-4h4" /></Pic>
      <Pic w={15} h={14} ink="#888"><path d="M15 2L4 13M15 6l-7 7M15 10l-3 3" /></Pic>
    </Devices>
  </HostStatus>
);

const ExcelTop = () => (
  <ExcelTitle>
    <Quick>
      <Pic w={18} h={16}>
        <path d="M5.5 1.5h10v13h-10zM10.5 1.5v13M5.5 5.5h10M5.5 9.5h10" />
        <path d="M0 3h9v10H0z" fill="#fff" stroke="none" /><path d="M2.5 5.5l4 5M6.5 5.5l-4 5" stroke={GREEN} strokeWidth="1.5" />
      </Pic>
      <QuickButton aria-label="저장"><Pic w={17} h={17}><path d="M.5.5h13l3 3v13H.5zM4 .5v5h8v-5M4 16v-6h9v6" strokeWidth="1.1" /></Pic></QuickButton>
      <QuickButton $dim aria-label="실행 취소"><Pic w={14} h={17}><path d="M.5 1v6.5H7M.5 7.5Q5 1 10 2.5q5 3 1.5 8L6 16" strokeWidth="1.3" /></Pic><Chevron /></QuickButton>
      <QuickButton $dim aria-label="다시 실행"><Pic w={14} h={17}><path d="M13.5 1v6.5H7M13.5 7.5Q9 1 4 2.5q-5 3-1.5 8L8 16" strokeWidth="1.3" /></Pic><Chevron /></QuickButton>
      <QuickButton aria-label="빠른 실행 사용자 지정"><Pic w={12} h={8} box="-4 0 12 8"><path d="M1 1.5h6" /><path d="M1 4h6L4 7z" fill="#fff" stroke="none" /></Pic></QuickButton>
      <DocName>통합 문서1  -  Excel</DocName>
    </Quick>
    <SearchBox>
      <Pic w={15} h={15}><circle cx="9" cy="5.5" r="4.8" /><path d="M5.5 9L1 14" strokeWidth="1.2" /></Pic>
      <BareInput placeholder="검색" aria-label="검색" />
    </SearchBox>
    <WinButtons>
      <Login>로그인</Login>
      <WinButton aria-label="최소화"><Pic w={10} h={10}><path d="M0 5.5h10" /></Pic></WinButton>
      <WinButton aria-label="이전 크기로"><Pic w={11} h={11}><rect x=".5" y="2.5" width="8" height="8" rx="1" /><path d="M2.5.5h6a2 2 0 0 1 2 2v6" /></Pic></WinButton>
      <WinButton aria-label="닫기"><Cross s={11} w={1.2} /></WinButton>
    </WinButtons>
  </ExcelTitle>
);

export default function App() {
  return (
    <>
      <Global />
      <Screen>
        <VmTop />
        <Guest>
          <ExcelTop />
          <RibbonTabs>
            {ribbonTabs.map((t) => <RibbonTab key={t} $on={t === '페이지 레이아웃'}>{t}</RibbonTab>)}
            <Share>
              <Pic w={12} h={12}><path d="M4.5 2.5h-4v9h10V8M3.5 8q.5-4 4.5-4V1.5L11.500 5 8 8V6Q5 6 3.5 8z" /></Pic>
              공유
              <Chevron />
            </Share>
          </RibbonTabs>
          <ExcelRibbon />
          <FormulaBar>
            <Box $w={101}>
              <BareInput aria-label="이름 상자" defaultValue="A1" />
              <Chevron big />
            </Box>
            <DotGap><Dots /></DotGap>
            <Box $w={74}>
              <Pic w={13} h={13} ink="#b0b0b0"><path d="M.5.5l12 12M12.5.5l-12 12" /></Pic>
              <Pic w={16} h={12} ink="#b0b0b0"><path d="M.5 6l5 5L15.5.5" /></Pic>
              <Fx>fx</Fx>
            </Box>
            <Box>
              <BareInput aria-label="수식 입력줄" />
              <Chevron big />
            </Box>
          </FormulaBar>
          <Sheet />
          <SheetBar>
            <SheetNav>
              <button aria-label="이전 시트"><Pic w={8} h={10}><path d="M6.5.5L1.5 5l5 4.5" strokeWidth="1.3" /></Pic></button>
              <button aria-label="다음 시트"><Pic w={8} h={10}><path d="M1.5.5l5 4.5-5 4.5" strokeWidth="1.3" /></Pic></button>
            </SheetNav>
            <SheetTab><span>Sheet1</span></SheetTab>
            <AddSheet aria-label="새 시트"><Pic w={11} h={17}><path d="M5.5 3v11M0 8.5h11" strokeWidth="1.2" /></Pic></AddSheet>
            <SheetScroll>
              <Dots />
              <Track>
                <Triangle w={8} h={9} d="M8 0v9L0 4.5z" />
                <Thumb />
                <Triangle w={12} h={9} d="M5 0v9l7-4.5z" />
              </Track>
            </SheetScroll>
          </SheetBar>
          <StatusBar>
            <Ready>준비</Ready>
            <Access>
              <Pic w={16} h={15}><circle cx="6.5" cy="2.5" r="1.7" /><path d="M.5 3.5l4 2v3l-2 5.5M12.5 3.5l-4 2V8M6.5 9l-1 5M8.5 11.5l2 2.5L15 9" strokeWidth="1.2" /></Pic>
              접근성: 계속 진행 가능
            </Access>
            <ViewButton $on aria-label="기본"><Pic w={13} h={13}><path d="M.5.5h12v12H.5zM4.5.5v12M8.5.5v12M.5 4.5h12M.5 8.5h12" /></Pic></ViewButton>
            <ViewButton aria-label="페이지 레이아웃"><Pic w={14} h={13}><path d="M.5.5h13v12H.5zM3.5 2.5h7v8h-7zM5 4.5h4M5 6.5h4M5 8.5h4" /></Pic></ViewButton>
            <ViewButton aria-label="페이지 나누기"><Pic w={14} h={13}><path d="M.5.5h13v12H.5zM5.5.5v7M.5 7.5h9v-7" /></Pic></ViewButton>
            <Zoom>
              <button aria-label="축소"><Pic w={9} h={9}><path d="M0 4.5h9" /></Pic></button>
              <Slider type="range" min="10" max="190" defaultValue="100" aria-label="확대/축소" />
              <button aria-label="확대"><Pic w={9} h={9}><path d="M0 4.5h9M4.5 0v9" /></Pic></button>
              <ZoomValue>100%</ZoomValue>
            </Zoom>
          </StatusBar>
          <Tasks />
        </Guest>
        <VmBottom />
      </Screen>
    </>
  );
}
